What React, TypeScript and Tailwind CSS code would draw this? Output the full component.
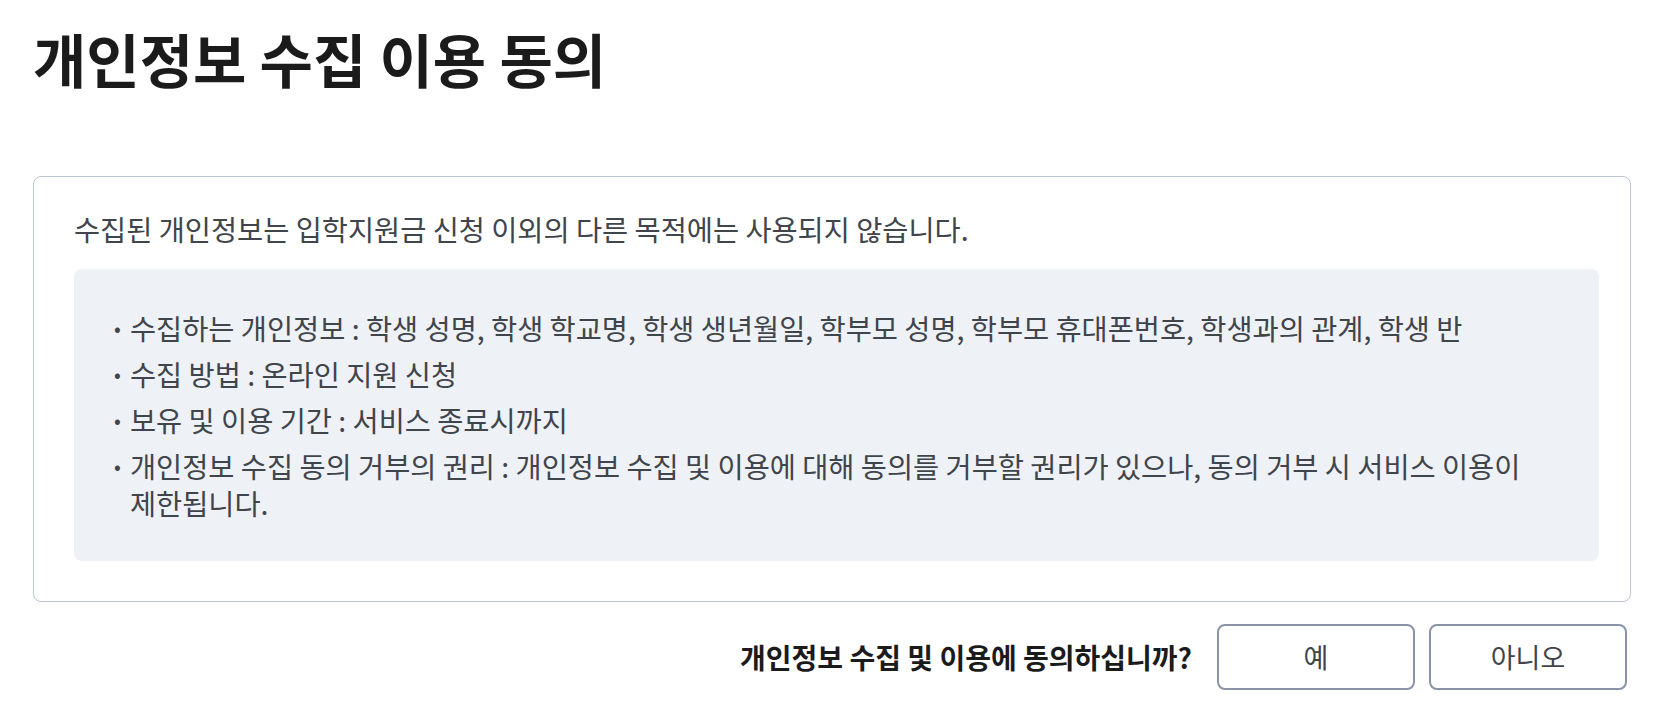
import React from 'react';

const items: string[] = [
  '수집하는 개인정보 : 학생 성명, 학생 학교명, 학생 생년월일, 학부모 성명, 학부모 휴대폰번호, 학생과의 관계, 학생 반',
  '수집 방법 : 온라인 지원 신청',
  '보유 및 이용 기간 : 서비스 종료시까지',
  '개인정보 수집 동의 거부의 권리 : 개인정보 수집 및 이용에 대해 동의를 거부할 권리가 있으나, 동의 거부 시 서비스 이용이 제한됩니다.',
];

const App: React.FC = () => {
  return (
    <div
      className="min-h-screen bg-white pl-[33px] pr-[31px] pt-[25px]"
      style={{ fontFamily: '"Noto Sans CJK KR", "Noto Sans", sans-serif' }}
    >
      <h1 className="text-[58px] font-bold leading-[67px] text-[#1b1b1b]">
        개인정보 수집 이용 동의
      </h1>

      <div className="mt-[84px] rounded-lg border border-[#bcc5d3] pt-[33px] pb-10 pl-10 pr-[31px]">
        <p className="text-[28.4px] leading-[37px] text-[#40444b]">
          수집된 개인정보는 입학지원금 신청 이외의 다른 목적에는 사용되지 않습니다.
        </p>
        <div className="mt-[22px] rounded-lg bg-[#eef1f6] px-10 py-10">
          <ul className="flex flex-col gap-[9px]">
            {items.map((t) => (
              <li key={t} className="flex break-keep text-[28.4px] leading-[37px] text-[#40444b]">
                <span className="w-[16px] shrink-0 text-[20px]">•</span>
                <span>{t}</span>
              </li>
            ))}
          </ul>
        </div>
      </div>

      <div className="mt-[22px] flex items-center justify-end pr-1">
        <span className="mr-[25px] text-[28px] font-bold text-[#1b1b1b]">
          개인정보 수집 및 이용에 동의하십니까?
        </span>
        <div className="flex gap-[14px]">
          <button className="h-[66px] w-[198px] rounded-lg border-2 border-[#8a94a8] bg-white text-[27px] text-[#40444b]">
            예
          </button>
          <button className="h-[66px] w-[198px] rounded-lg border-2 border-[#8a94a8] bg-white text-[27px] text-[#40444b]">
            아니오
          </button>
        </div>
      </div>
    </div>
  );
};

export default App;
